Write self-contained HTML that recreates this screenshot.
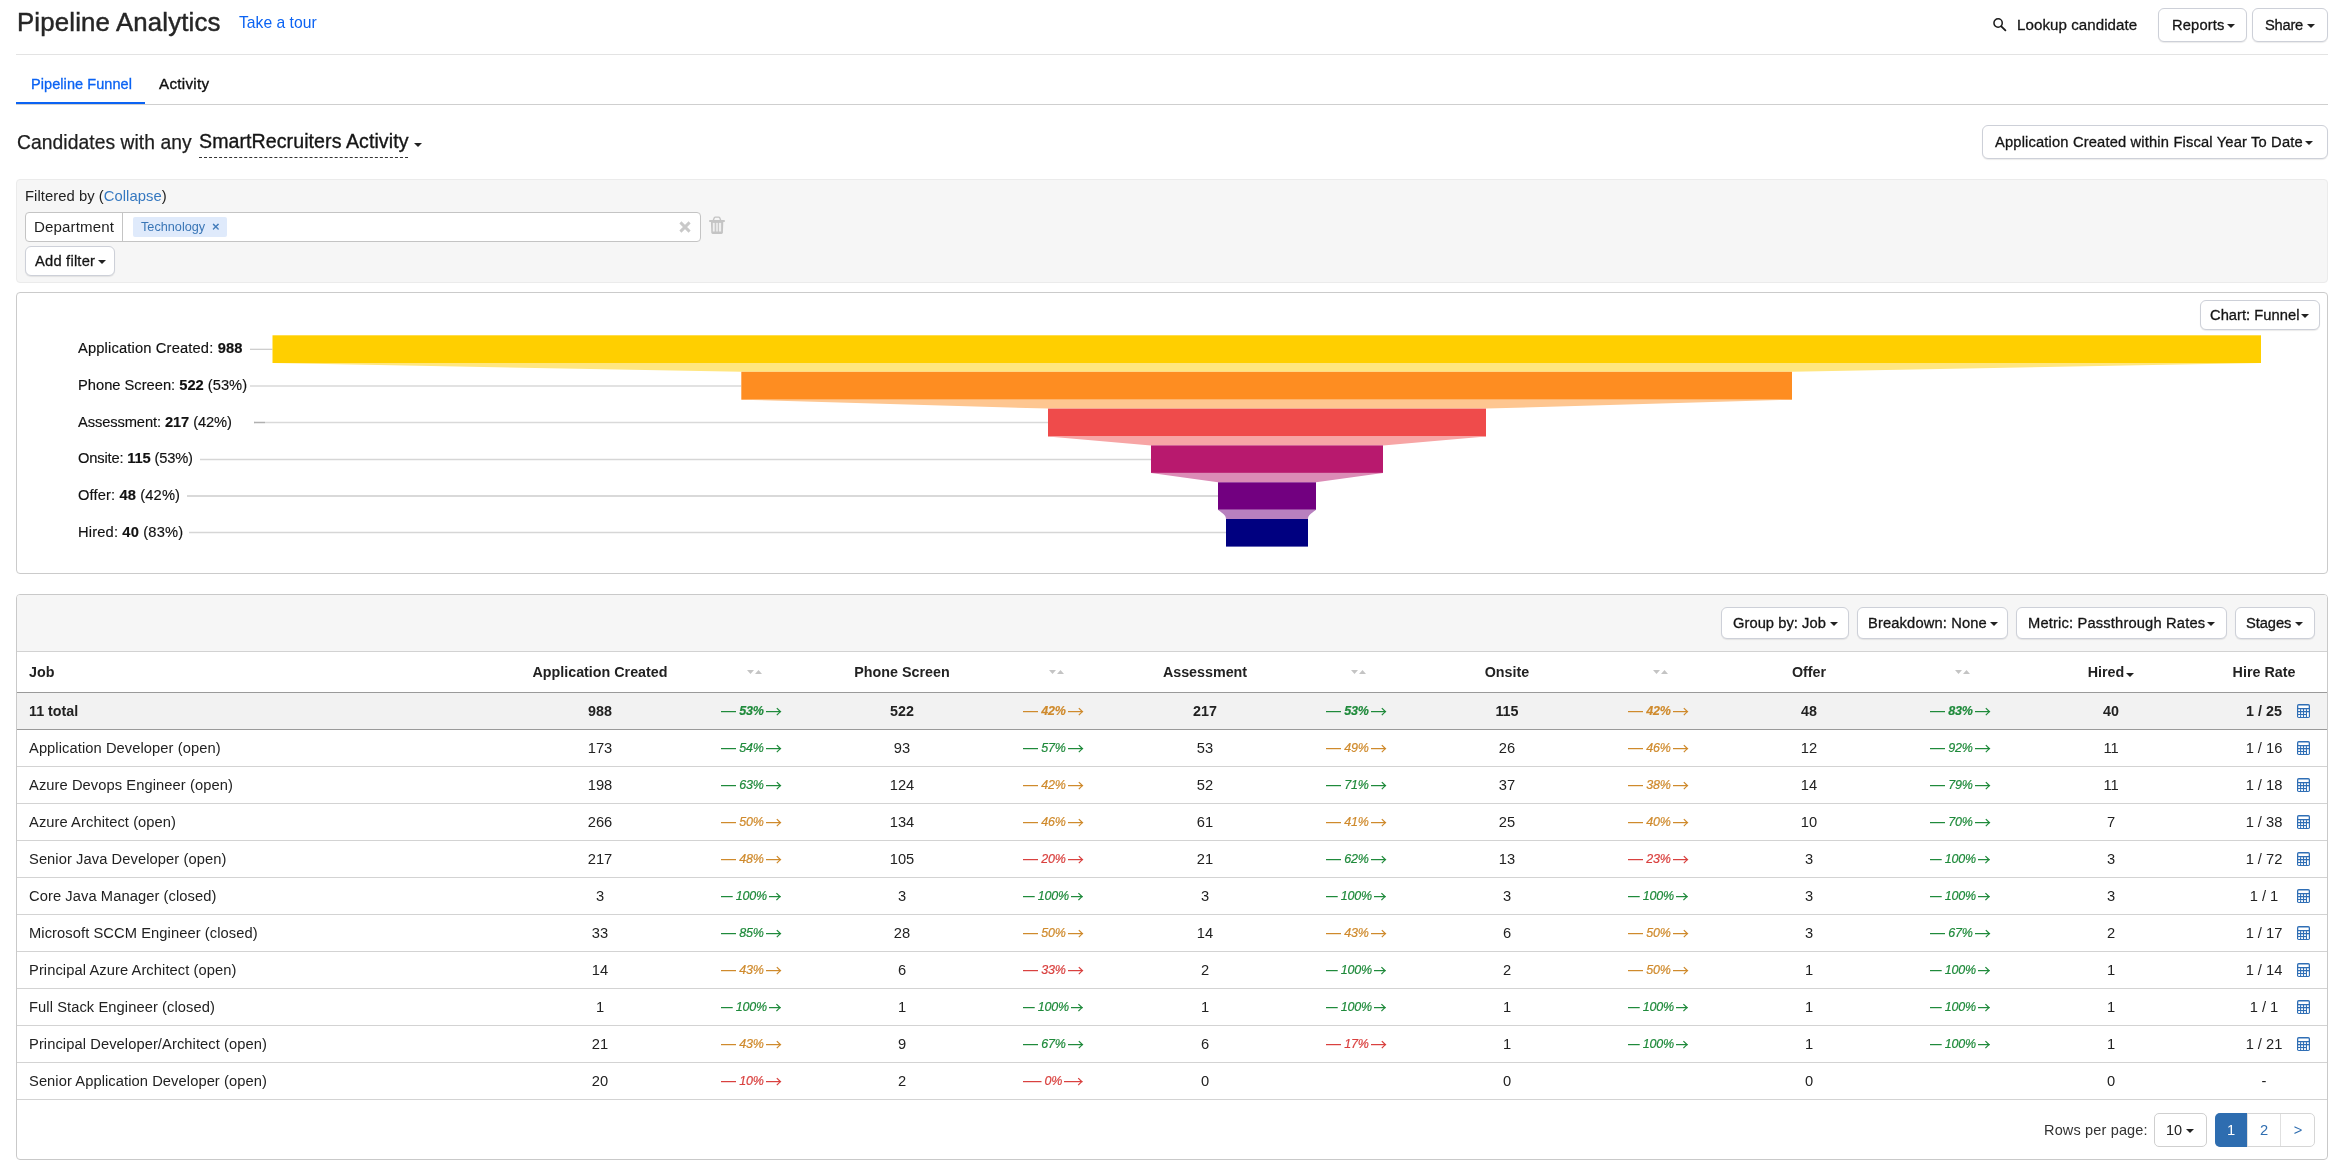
<!DOCTYPE html>
<html><head><meta charset="utf-8"><title>Pipeline Analytics</title><style>
html,body{margin:0;padding:0;background:#fff;}
body{width:2336px;height:1163px;position:relative;overflow:hidden;-webkit-font-smoothing:antialiased;font-family:"Liberation Sans",sans-serif;color:#222;}
.t{position:absolute;white-space:nowrap;will-change:transform;}
.t b{font-weight:700;}
.rate{position:absolute;will-change:transform;width:60px;height:19px;display:flex;align-items:center;font-style:italic;font-size:12.5px;line-height:19px;}
.rate .dl{flex:1 1 0;min-width:0;margin-right:3px;display:block;}
.rate span{flex:none;margin-right:2.2px;letter-spacing:-0.15px;-webkit-text-stroke:0.2px currentColor;}
.rate .ar{flex:1 1 0;min-width:0;display:block;overflow:visible;}
</style></head>
<body>
<div class="t" style="top:10.00px;font-size:25.8px;line-height:25.8px;color:#262626;letter-spacing:0.153px;left:17.20px;-webkit-text-stroke:0.45px #262626;">Pipeline Analytics</div><div class="t" style="top:15.00px;font-size:15.7px;line-height:15.7px;color:#0b63f3;left:238.70px;">Take a tour</div><svg style="position:absolute;left:1992px;top:17px" width="16" height="16" viewBox="0 0 16 16"><circle cx="6.1" cy="6.0" r="4.15" fill="none" stroke="#1a1a1a" stroke-width="1.5"/><line x1="9.3" y1="9.3" x2="13.4" y2="13.4" stroke="#1a1a1a" stroke-width="1.8" stroke-linecap="round"/></svg><div class="t" style="top:17.00px;font-size:15.1px;line-height:15.1px;color:#151515;letter-spacing:0.067px;left:2016.60px;-webkit-text-stroke:0.3px #151515;">Lookup candidate</div><div style="position:absolute;left:2158.00px;top:8.00px;width:89.00px;height:34.00px;box-sizing:border-box;background:#fff;border:1px solid #cdd0d8;border-radius:6px;box-shadow:0 1px 1px rgba(0,0,0,.08);"></div><div class="t" style="top:18.00px;font-size:14.7px;line-height:14.7px;color:#151515;letter-spacing:0.167px;left:2171.70px;-webkit-text-stroke:0.3px #151515;">Reports</div><div style="position:absolute;left:2227px;top:23.5px;width:0;height:0;border-left:4.0px solid transparent;border-right:4.0px solid transparent;border-top:4px solid #222"></div><div style="position:absolute;left:2252.00px;top:8.00px;width:76.00px;height:34.00px;box-sizing:border-box;background:#fff;border:1px solid #cdd0d8;border-radius:6px;box-shadow:0 1px 1px rgba(0,0,0,.08);"></div><div class="t" style="top:18.00px;font-size:14.7px;line-height:14.7px;color:#151515;letter-spacing:-0.25px;left:2265.00px;-webkit-text-stroke:0.3px #151515;">Share</div><div style="position:absolute;left:2307px;top:23.5px;width:0;height:0;border-left:4.0px solid transparent;border-right:4.0px solid transparent;border-top:4px solid #222"></div><div style="position:absolute;left:16.00px;top:54.00px;width:2312.00px;height:1.00px;box-sizing:border-box;background:#e3e3e3;"></div><div class="t" style="top:77.00px;font-size:14.5px;line-height:14.5px;color:#0b63f3;letter-spacing:0.071px;left:30.60px;-webkit-text-stroke:0.3px #0b63f3;">Pipeline Funnel</div><div class="t" style="top:76.00px;font-size:15.2px;line-height:15.2px;color:#111;letter-spacing:0.286px;left:159.40px;-webkit-text-stroke:0.35px #111;">Activity</div><div style="position:absolute;left:16.00px;top:104.00px;width:2312.00px;height:1.00px;box-sizing:border-box;background:#cfcfcf;"></div><div style="position:absolute;left:16.00px;top:102.00px;width:129.00px;height:2.20px;box-sizing:border-box;background:#0b63f3;"></div><div class="t" style="top:133.00px;font-size:19.3px;line-height:19.3px;color:#1e1e1e;letter-spacing:0.056px;left:16.60px;-webkit-text-stroke:0.25px #1e1e1e;">Candidates with any</div><div class="t" style="top:132.00px;font-size:19.6px;line-height:19.6px;color:#151515;letter-spacing:0.065px;left:199.30px;-webkit-text-stroke:0.35px #151515;">SmartRecruiters Activity</div><div style="position:absolute;left:199.30px;top:156.80px;width:208.70px;height:1.20px;box-sizing:border-box;border-top:1.2px dashed #333;"></div><div style="position:absolute;left:413.5px;top:143px;width:0;height:0;border-left:4.5px solid transparent;border-right:4.5px solid transparent;border-top:4.5px solid #222"></div><div style="position:absolute;left:1982.00px;top:125.00px;width:346.00px;height:34.00px;box-sizing:border-box;background:#fff;border:1px solid #cdd0d8;border-radius:6px;box-shadow:0 1px 1px rgba(0,0,0,.08);"></div><div class="t" style="top:135.00px;font-size:14.7px;line-height:14.7px;color:#151515;letter-spacing:0.166px;left:1995.00px;-webkit-text-stroke:0.3px #151515;">Application Created within Fiscal Year To Date</div><div style="position:absolute;left:2305px;top:140.5px;width:0;height:0;border-left:4.0px solid transparent;border-right:4.0px solid transparent;border-top:4px solid #222"></div><div style="position:absolute;left:16.00px;top:179.00px;width:2312.00px;height:104.00px;box-sizing:border-box;background:#f6f6f6;border:1px solid #ebebeb;border-radius:4px;"></div><div class="t" style="top:189.00px;font-size:14.8px;line-height:14.8px;letter-spacing:0.048px;left:25.40px;">Filtered by (<span style="color:#3578c0">Collapse</span>)</div><div style="position:absolute;left:25.40px;top:212.20px;width:675.60px;height:29.60px;box-sizing:border-box;background:#fff;border:1px solid #c4c4c4;border-radius:4px;"></div><div style="position:absolute;left:122.00px;top:212.20px;width:1.20px;height:29.60px;box-sizing:border-box;background:#c4c4c4;"></div><div class="t" style="top:219.00px;font-size:15.1px;line-height:15.1px;color:#1e1e1e;letter-spacing:0.133px;left:33.80px;">Department</div><div style="position:absolute;left:133.20px;top:217.30px;width:93.80px;height:20.00px;box-sizing:border-box;background:#dfeafb;border-radius:2px;"></div><div class="t" style="top:221.00px;font-size:12.7px;line-height:12.7px;color:#3a76b6;left:140.90px;">Technology</div><div class="t" style="top:220.00px;font-size:13px;line-height:13px;color:#3a76b6;left:212.00px;-webkit-text-stroke:0.4px #3a76b6;">&#215;</div><svg style="position:absolute;left:678.5px;top:220.5px" width="12" height="12" viewBox="0 0 12 12"><path d="M1.4 1.4L10.6 10.6M10.6 1.4L1.4 10.6" stroke="#c9c9c9" stroke-width="2.9"/></svg><svg style="position:absolute;left:709px;top:216px" width="16" height="19" viewBox="0 0 16 19"><path d="M4.2 4.4L5.3 1.8Q5.6 1.1 6.4 1.1H9.6Q10.4 1.1 10.7 1.8L11.8 4.4" fill="none" stroke="#c4c4c4" stroke-width="1.4"/><rect x="0.2" y="4.0" width="15.6" height="2.0" rx="0.5" fill="#c4c4c4"/><path d="M1.9 5.8H14.3L13.9 16.6Q13.8 17.9 12.6 17.9H3.6Q2.4 17.9 2.3 16.6Z" fill="#c4c4c4"/><rect x="3.8" y="6.9" width="1.9" height="8.6" fill="#efefef"/><rect x="6.9" y="6.9" width="2.2" height="8.6" fill="#e6e6e6"/><rect x="10.0" y="6.9" width="2.1" height="8.6" fill="#efefef"/></svg><div style="position:absolute;left:25.00px;top:246.00px;width:90.00px;height:30.00px;box-sizing:border-box;background:#fff;border:1px solid #cdd0d8;border-radius:6px;box-shadow:0 1px 1px rgba(0,0,0,.08);"></div><div class="t" style="top:254.00px;font-size:14.7px;line-height:14.7px;color:#151515;letter-spacing:0.222px;left:34.50px;-webkit-text-stroke:0.3px #151515;">Add filter</div><div style="position:absolute;left:98px;top:259.5px;width:0;height:0;border-left:4.0px solid transparent;border-right:4.0px solid transparent;border-top:4px solid #222"></div><div style="position:absolute;left:16.00px;top:292.00px;width:2312.00px;height:282.00px;box-sizing:border-box;background:#fff;border:1px solid #cbcbcb;border-radius:4px;"></div><div style="position:absolute;left:2200.00px;top:300.00px;width:120.00px;height:30.00px;box-sizing:border-box;background:#fff;border:1px solid #cdd0d8;border-radius:6px;box-shadow:0 1px 1px rgba(0,0,0,.08);"></div><div class="t" style="top:308.00px;font-size:14.7px;line-height:14.7px;color:#151515;letter-spacing:0.038px;left:2209.70px;-webkit-text-stroke:0.3px #151515;">Chart: Funnel</div><div style="position:absolute;left:2301px;top:313.5px;width:0;height:0;border-left:4.0px solid transparent;border-right:4.0px solid transparent;border-top:4px solid #222"></div><svg style="position:absolute;left:0;top:0" width="2336" height="600" viewBox="0 0 2336 600"><line x1="250" y1="349.3" x2="272.5" y2="349.3" stroke="#c9c9c9" stroke-width="1.2"/><line x1="250" y1="386.0" x2="741.3" y2="386.0" stroke="#e2e2e2" stroke-width="2.0"/><line x1="254" y1="422.5" x2="1048" y2="422.5" stroke="#d9d9d9" stroke-width="1.5"/><line x1="200" y1="459.4" x2="1151" y2="459.4" stroke="#d6d6d6" stroke-width="1.5"/><line x1="187" y1="496.0" x2="1218" y2="496.0" stroke="#d9d9d9" stroke-width="1.8"/><line x1="189" y1="532.4" x2="1226" y2="532.4" stroke="#d6d6d6" stroke-width="1.5"/><line x1="254" y1="422.5" x2="265" y2="422.5" stroke="#b0b0b0" stroke-width="1.3"/><rect x="272.5" y="335.3" width="1988.5" height="27.69999999999999" fill="#ffcf00"/><path d="M272.5 363.0 L2261 363.0 L1792 371.8 L741.3 371.8 Z" fill="#ffe680"/><rect x="741.3" y="371.8" width="1050.7" height="27.899999999999977" fill="#fe8d21"/><path d="M741.3 399.7 L1792 399.7 L1486 408.6 L1048 408.6 Z" fill="#fec690"/><rect x="1048" y="408.6" width="438" height="27.899999999999977" fill="#ef4b4b"/><path d="M1048 436.5 L1486 436.5 L1383 445.4 L1151 445.4 Z" fill="#f7a5a5"/><rect x="1151" y="445.4" width="232" height="27.5" fill="#b8196e"/><path d="M1151 472.9 L1383 472.9 L1316 482.3 L1218 482.3 Z" fill="#db8cb6"/><rect x="1218" y="482.3" width="98" height="27.5" fill="#720080"/><path d="M1218 509.8 L1316 509.8 C1311 513.8 1308 515.3 1308 519.0 L1226 519.0 C1226 515.3 1223 513.8 1218 509.8 Z" fill="#b880bf"/><rect x="1226" y="519.0" width="82" height="27.600000000000023" fill="#000080"/></svg><div class="t" style="top:341.00px;font-size:14.7px;line-height:14.7px;color:#111;letter-spacing:0.157px;left:77.80px;-webkit-text-stroke:0.15px #111;">Application Created: <b>988</b></div><div class="t" style="top:378.00px;font-size:14.7px;line-height:14.7px;color:#111;left:77.80px;-webkit-text-stroke:0.15px #111;">Phone Screen: <b>522</b> (53%)</div><div class="t" style="top:415.00px;font-size:14.7px;line-height:14.7px;color:#111;letter-spacing:-0.1px;left:77.80px;-webkit-text-stroke:0.15px #111;">Assessment: <b>217</b> (42%)</div><div class="t" style="top:451.00px;font-size:14.7px;line-height:14.7px;color:#111;letter-spacing:-0.163px;left:77.80px;-webkit-text-stroke:0.15px #111;">Onsite: <b>115</b> (53%)</div><div class="t" style="top:488.00px;font-size:14.7px;line-height:14.7px;color:#111;letter-spacing:0.129px;left:77.80px;-webkit-text-stroke:0.15px #111;">Offer: <b>48</b> (42%)</div><div class="t" style="top:525.00px;font-size:14.7px;line-height:14.7px;color:#111;letter-spacing:0.157px;left:77.80px;-webkit-text-stroke:0.15px #111;">Hired: <b>40</b> (83%)</div><div style="position:absolute;left:16.00px;top:594.00px;width:2312.00px;height:566.00px;box-sizing:border-box;background:#fff;border:1px solid #c9c9c9;border-radius:4px;"></div><div style="position:absolute;left:17.00px;top:595.00px;width:2310.00px;height:56.00px;box-sizing:border-box;background:#f6f6f6;border-radius:3px 3px 0 0;"></div><div style="position:absolute;left:17.00px;top:651.00px;width:2310.00px;height:1.00px;box-sizing:border-box;background:#d2d2d2;"></div><div style="position:absolute;left:1721.00px;top:607.00px;width:128.00px;height:32.00px;box-sizing:border-box;background:#fff;border:1px solid #cdd0d8;border-radius:6px;box-shadow:0 1px 1px rgba(0,0,0,.08);"></div><div class="t" style="top:616.00px;font-size:14.7px;line-height:14.7px;color:#151515;letter-spacing:0.05px;left:1732.60px;-webkit-text-stroke:0.3px #151515;">Group by: Job</div><div style="position:absolute;left:1830.3px;top:621.5px;width:0;height:0;border-left:4.0px solid transparent;border-right:4.0px solid transparent;border-top:4px solid #222"></div><div style="position:absolute;left:1857.00px;top:607.00px;width:151.00px;height:32.00px;box-sizing:border-box;background:#fff;border:1px solid #cdd0d8;border-radius:6px;box-shadow:0 1px 1px rgba(0,0,0,.08);"></div><div class="t" style="top:616.00px;font-size:14.7px;line-height:14.7px;color:#151515;letter-spacing:0.143px;left:1868.20px;-webkit-text-stroke:0.3px #151515;">Breakdown: None</div><div style="position:absolute;left:1990px;top:621.5px;width:0;height:0;border-left:4.0px solid transparent;border-right:4.0px solid transparent;border-top:4px solid #222"></div><div style="position:absolute;left:2016.00px;top:607.00px;width:211.00px;height:32.00px;box-sizing:border-box;background:#fff;border:1px solid #cdd0d8;border-radius:6px;box-shadow:0 1px 1px rgba(0,0,0,.08);"></div><div class="t" style="top:616.00px;font-size:14.7px;line-height:14.7px;color:#151515;letter-spacing:0.167px;left:2027.70px;-webkit-text-stroke:0.3px #151515;">Metric: Passthrough Rates</div><div style="position:absolute;left:2207px;top:621.5px;width:0;height:0;border-left:4.0px solid transparent;border-right:4.0px solid transparent;border-top:4px solid #222"></div><div style="position:absolute;left:2235.00px;top:607.00px;width:80.00px;height:32.00px;box-sizing:border-box;background:#fff;border:1px solid #cdd0d8;border-radius:6px;box-shadow:0 1px 1px rgba(0,0,0,.08);"></div><div class="t" style="top:616.00px;font-size:14.7px;line-height:14.7px;color:#151515;letter-spacing:-0.08px;left:2245.80px;-webkit-text-stroke:0.3px #151515;">Stages</div><div style="position:absolute;left:2295px;top:621.5px;width:0;height:0;border-left:4.0px solid transparent;border-right:4.0px solid transparent;border-top:4px solid #222"></div><div class="t" style="top:665.00px;font-size:14.3px;line-height:14.3px;font-weight:700;left:29.40px;">Job</div><div class="t" style="top:665.00px;font-size:14.3px;line-height:14.3px;font-weight:700;left:300.20px;width:600px;text-align:center;">Application Created</div><div class="t" style="top:665.00px;font-size:14.3px;line-height:14.3px;font-weight:700;left:602.35px;width:600px;text-align:center;">Phone Screen</div><div class="t" style="top:665.00px;font-size:14.3px;line-height:14.3px;font-weight:700;left:904.50px;width:600px;text-align:center;">Assessment</div><div class="t" style="top:665.00px;font-size:14.3px;line-height:14.3px;font-weight:700;left:1206.65px;width:600px;text-align:center;">Onsite</div><div class="t" style="top:665.00px;font-size:14.3px;line-height:14.3px;font-weight:700;left:1508.80px;width:600px;text-align:center;">Offer</div><div class="t" style="top:665.00px;font-size:14.3px;line-height:14.3px;font-weight:700;left:1806.00px;width:600px;text-align:center;">Hired</div><div style="position:absolute;left:2126px;top:673px;width:0;height:0;border-left:4.0px solid transparent;border-right:4.0px solid transparent;border-top:4px solid #222"></div><svg style="position:absolute;left:746.6px;top:670px" width="16" height="5" viewBox="0 0 16 5"><path d="M0 0H7L3.5 4Z M8 4H15L11.5 0Z" fill="#c4c4c4"/></svg><svg style="position:absolute;left:1048.8px;top:670px" width="16" height="5" viewBox="0 0 16 5"><path d="M0 0H7L3.5 4Z M8 4H15L11.5 0Z" fill="#c4c4c4"/></svg><svg style="position:absolute;left:1351.0px;top:670px" width="16" height="5" viewBox="0 0 16 5"><path d="M0 0H7L3.5 4Z M8 4H15L11.5 0Z" fill="#c4c4c4"/></svg><svg style="position:absolute;left:1653.1999999999998px;top:670px" width="16" height="5" viewBox="0 0 16 5"><path d="M0 0H7L3.5 4Z M8 4H15L11.5 0Z" fill="#c4c4c4"/></svg><svg style="position:absolute;left:1955.4px;top:670px" width="16" height="5" viewBox="0 0 16 5"><path d="M0 0H7L3.5 4Z M8 4H15L11.5 0Z" fill="#c4c4c4"/></svg><div class="t" style="top:665.00px;font-size:14.3px;line-height:14.3px;font-weight:700;left:1964.00px;width:600px;text-align:center;">Hire Rate</div><div style="position:absolute;left:17.00px;top:692.00px;width:2310.00px;height:1.00px;box-sizing:border-box;background:#9a9a9a;"></div><div style="position:absolute;left:17.00px;top:693.00px;width:2310.00px;height:36.00px;box-sizing:border-box;background:#f2f2f2;"></div><div style="position:absolute;left:17.00px;top:729.00px;width:2310.00px;height:1.00px;box-sizing:border-box;background:#9a9a9a;"></div><div class="t" style="top:704.00px;font-size:14.3px;line-height:14.3px;font-weight:700;left:29.40px;">11 total</div><div class="t" style="top:704.00px;font-size:14.3px;line-height:14.3px;font-weight:700;left:300.20px;width:600px;text-align:center;">988</div><div class="t" style="top:704.00px;font-size:14.3px;line-height:14.3px;font-weight:700;left:602.35px;width:600px;text-align:center;">522</div><div class="t" style="top:704.00px;font-size:14.3px;line-height:14.3px;font-weight:700;left:904.50px;width:600px;text-align:center;">217</div><div class="t" style="top:704.00px;font-size:14.3px;line-height:14.3px;font-weight:700;left:1206.65px;width:600px;text-align:center;">115</div><div class="t" style="top:704.00px;font-size:14.3px;line-height:14.3px;font-weight:700;left:1508.80px;width:600px;text-align:center;">48</div><div class="t" style="top:704.00px;font-size:14.3px;line-height:14.3px;font-weight:700;left:1810.95px;width:600px;text-align:center;">40</div><div class="rate" style="left:721.0px;top:702px;color:#1f8a3b;font-weight:700;"><svg class="dl" height="19"><line x1="0" y1="9.6" x2="100%" y2="9.6" stroke="#1f8a3b" stroke-width="1.25"/></svg><span>53%</span><svg class="ar" height="19"><line x1="0" y1="9.6" x2="100%" y2="9.6" stroke="#1f8a3b" stroke-width="1.25"/><svg x="100%" y="0" width="1" height="19" overflow="visible"><path d="M-4.3 6.1L-0.8 9.6L-4.3 13.1" fill="none" stroke="#1f8a3b" stroke-width="1.25"/></svg></svg></div><div class="rate" style="left:1023.25px;top:702px;color:#cf8a2c;font-weight:700;"><svg class="dl" height="19"><line x1="0" y1="9.6" x2="100%" y2="9.6" stroke="#cf8a2c" stroke-width="1.25"/></svg><span>42%</span><svg class="ar" height="19"><line x1="0" y1="9.6" x2="100%" y2="9.6" stroke="#cf8a2c" stroke-width="1.25"/><svg x="100%" y="0" width="1" height="19" overflow="visible"><path d="M-4.3 6.1L-0.8 9.6L-4.3 13.1" fill="none" stroke="#cf8a2c" stroke-width="1.25"/></svg></svg></div><div class="rate" style="left:1325.5px;top:702px;color:#1f8a3b;font-weight:700;"><svg class="dl" height="19"><line x1="0" y1="9.6" x2="100%" y2="9.6" stroke="#1f8a3b" stroke-width="1.25"/></svg><span>53%</span><svg class="ar" height="19"><line x1="0" y1="9.6" x2="100%" y2="9.6" stroke="#1f8a3b" stroke-width="1.25"/><svg x="100%" y="0" width="1" height="19" overflow="visible"><path d="M-4.3 6.1L-0.8 9.6L-4.3 13.1" fill="none" stroke="#1f8a3b" stroke-width="1.25"/></svg></svg></div><div class="rate" style="left:1627.75px;top:702px;color:#cf8a2c;font-weight:700;"><svg class="dl" height="19"><line x1="0" y1="9.6" x2="100%" y2="9.6" stroke="#cf8a2c" stroke-width="1.25"/></svg><span>42%</span><svg class="ar" height="19"><line x1="0" y1="9.6" x2="100%" y2="9.6" stroke="#cf8a2c" stroke-width="1.25"/><svg x="100%" y="0" width="1" height="19" overflow="visible"><path d="M-4.3 6.1L-0.8 9.6L-4.3 13.1" fill="none" stroke="#cf8a2c" stroke-width="1.25"/></svg></svg></div><div class="rate" style="left:1930.0px;top:702px;color:#1f8a3b;font-weight:700;"><svg class="dl" height="19"><line x1="0" y1="9.6" x2="100%" y2="9.6" stroke="#1f8a3b" stroke-width="1.25"/></svg><span>83%</span><svg class="ar" height="19"><line x1="0" y1="9.6" x2="100%" y2="9.6" stroke="#1f8a3b" stroke-width="1.25"/><svg x="100%" y="0" width="1" height="19" overflow="visible"><path d="M-4.3 6.1L-0.8 9.6L-4.3 13.1" fill="none" stroke="#1f8a3b" stroke-width="1.25"/></svg></svg></div><div class="t" style="top:704.00px;font-size:14.3px;line-height:14.3px;font-weight:700;left:1964.30px;width:600px;text-align:center;">1 / 25</div><svg style="position:absolute;left:2297px;top:704px" width="13" height="14" viewBox="0 0 13 14"><rect x="0" y="0" width="13" height="14" rx="1.8" fill="#2f6eb5"/><rect x="1.3" y="1.5" width="10.4" height="2.5" rx="0.3" fill="#fff"/><g fill="#fff"><rect x="1.20" y="5.20" width="1.85" height="1.85" rx="0.2"/><rect x="4.13" y="5.20" width="1.85" height="1.85" rx="0.2"/><rect x="7.06" y="5.20" width="1.85" height="1.85" rx="0.2"/><rect x="9.99" y="5.20" width="1.85" height="1.85" rx="0.2"/><rect x="1.20" y="8.13" width="1.85" height="1.85" rx="0.2"/><rect x="4.13" y="8.13" width="1.85" height="1.85" rx="0.2"/><rect x="7.06" y="8.13" width="1.85" height="1.85" rx="0.2"/><rect x="1.20" y="11.06" width="1.85" height="1.85" rx="0.2"/><rect x="4.13" y="11.06" width="1.85" height="1.85" rx="0.2"/><rect x="7.06" y="11.06" width="1.85" height="1.85" rx="0.2"/><rect x="9.99" y="8.13" width="1.85" height="4.75" rx="0.3"/></g></svg><div style="position:absolute;left:17.00px;top:766.00px;width:2310.00px;height:1.00px;box-sizing:border-box;background:#d3d3d3;"></div><div class="t" style="top:741.00px;font-size:14.7px;line-height:14.7px;letter-spacing:0.08px;left:29.40px;">Application Developer (open)</div><div class="t" style="top:741.00px;font-size:14.7px;line-height:14.7px;left:300.20px;width:600px;text-align:center;">173</div><div class="t" style="top:741.00px;font-size:14.7px;line-height:14.7px;left:602.35px;width:600px;text-align:center;">93</div><div class="t" style="top:741.00px;font-size:14.7px;line-height:14.7px;left:904.50px;width:600px;text-align:center;">53</div><div class="t" style="top:741.00px;font-size:14.7px;line-height:14.7px;left:1206.65px;width:600px;text-align:center;">26</div><div class="t" style="top:741.00px;font-size:14.7px;line-height:14.7px;left:1508.80px;width:600px;text-align:center;">12</div><div class="t" style="top:741.00px;font-size:14.7px;line-height:14.7px;left:1810.95px;width:600px;text-align:center;">11</div><div class="rate" style="left:721.0px;top:739px;color:#1f8a3b;"><svg class="dl" height="19"><line x1="0" y1="9.6" x2="100%" y2="9.6" stroke="#1f8a3b" stroke-width="1.25"/></svg><span>54%</span><svg class="ar" height="19"><line x1="0" y1="9.6" x2="100%" y2="9.6" stroke="#1f8a3b" stroke-width="1.25"/><svg x="100%" y="0" width="1" height="19" overflow="visible"><path d="M-4.3 6.1L-0.8 9.6L-4.3 13.1" fill="none" stroke="#1f8a3b" stroke-width="1.25"/></svg></svg></div><div class="rate" style="left:1023.25px;top:739px;color:#1f8a3b;"><svg class="dl" height="19"><line x1="0" y1="9.6" x2="100%" y2="9.6" stroke="#1f8a3b" stroke-width="1.25"/></svg><span>57%</span><svg class="ar" height="19"><line x1="0" y1="9.6" x2="100%" y2="9.6" stroke="#1f8a3b" stroke-width="1.25"/><svg x="100%" y="0" width="1" height="19" overflow="visible"><path d="M-4.3 6.1L-0.8 9.6L-4.3 13.1" fill="none" stroke="#1f8a3b" stroke-width="1.25"/></svg></svg></div><div class="rate" style="left:1325.5px;top:739px;color:#cf8a2c;"><svg class="dl" height="19"><line x1="0" y1="9.6" x2="100%" y2="9.6" stroke="#cf8a2c" stroke-width="1.25"/></svg><span>49%</span><svg class="ar" height="19"><line x1="0" y1="9.6" x2="100%" y2="9.6" stroke="#cf8a2c" stroke-width="1.25"/><svg x="100%" y="0" width="1" height="19" overflow="visible"><path d="M-4.3 6.1L-0.8 9.6L-4.3 13.1" fill="none" stroke="#cf8a2c" stroke-width="1.25"/></svg></svg></div><div class="rate" style="left:1627.75px;top:739px;color:#cf8a2c;"><svg class="dl" height="19"><line x1="0" y1="9.6" x2="100%" y2="9.6" stroke="#cf8a2c" stroke-width="1.25"/></svg><span>46%</span><svg class="ar" height="19"><line x1="0" y1="9.6" x2="100%" y2="9.6" stroke="#cf8a2c" stroke-width="1.25"/><svg x="100%" y="0" width="1" height="19" overflow="visible"><path d="M-4.3 6.1L-0.8 9.6L-4.3 13.1" fill="none" stroke="#cf8a2c" stroke-width="1.25"/></svg></svg></div><div class="rate" style="left:1930.0px;top:739px;color:#1f8a3b;"><svg class="dl" height="19"><line x1="0" y1="9.6" x2="100%" y2="9.6" stroke="#1f8a3b" stroke-width="1.25"/></svg><span>92%</span><svg class="ar" height="19"><line x1="0" y1="9.6" x2="100%" y2="9.6" stroke="#1f8a3b" stroke-width="1.25"/><svg x="100%" y="0" width="1" height="19" overflow="visible"><path d="M-4.3 6.1L-0.8 9.6L-4.3 13.1" fill="none" stroke="#1f8a3b" stroke-width="1.25"/></svg></svg></div><div class="t" style="top:741.00px;font-size:14.7px;line-height:14.7px;left:1964.30px;width:600px;text-align:center;">1 / 16</div><svg style="position:absolute;left:2297px;top:741px" width="13" height="14" viewBox="0 0 13 14"><rect x="0" y="0" width="13" height="14" rx="1.8" fill="#2f6eb5"/><rect x="1.3" y="1.5" width="10.4" height="2.5" rx="0.3" fill="#fff"/><g fill="#fff"><rect x="1.20" y="5.20" width="1.85" height="1.85" rx="0.2"/><rect x="4.13" y="5.20" width="1.85" height="1.85" rx="0.2"/><rect x="7.06" y="5.20" width="1.85" height="1.85" rx="0.2"/><rect x="9.99" y="5.20" width="1.85" height="1.85" rx="0.2"/><rect x="1.20" y="8.13" width="1.85" height="1.85" rx="0.2"/><rect x="4.13" y="8.13" width="1.85" height="1.85" rx="0.2"/><rect x="7.06" y="8.13" width="1.85" height="1.85" rx="0.2"/><rect x="1.20" y="11.06" width="1.85" height="1.85" rx="0.2"/><rect x="4.13" y="11.06" width="1.85" height="1.85" rx="0.2"/><rect x="7.06" y="11.06" width="1.85" height="1.85" rx="0.2"/><rect x="9.99" y="8.13" width="1.85" height="4.75" rx="0.3"/></g></svg><div style="position:absolute;left:17.00px;top:803.00px;width:2310.00px;height:1.00px;box-sizing:border-box;background:#d3d3d3;"></div><div class="t" style="top:778.00px;font-size:14.7px;line-height:14.7px;letter-spacing:0.08px;left:29.40px;">Azure Devops Engineer (open)</div><div class="t" style="top:778.00px;font-size:14.7px;line-height:14.7px;left:300.20px;width:600px;text-align:center;">198</div><div class="t" style="top:778.00px;font-size:14.7px;line-height:14.7px;left:602.35px;width:600px;text-align:center;">124</div><div class="t" style="top:778.00px;font-size:14.7px;line-height:14.7px;left:904.50px;width:600px;text-align:center;">52</div><div class="t" style="top:778.00px;font-size:14.7px;line-height:14.7px;left:1206.65px;width:600px;text-align:center;">37</div><div class="t" style="top:778.00px;font-size:14.7px;line-height:14.7px;left:1508.80px;width:600px;text-align:center;">14</div><div class="t" style="top:778.00px;font-size:14.7px;line-height:14.7px;left:1810.95px;width:600px;text-align:center;">11</div><div class="rate" style="left:721.0px;top:776px;color:#1f8a3b;"><svg class="dl" height="19"><line x1="0" y1="9.6" x2="100%" y2="9.6" stroke="#1f8a3b" stroke-width="1.25"/></svg><span>63%</span><svg class="ar" height="19"><line x1="0" y1="9.6" x2="100%" y2="9.6" stroke="#1f8a3b" stroke-width="1.25"/><svg x="100%" y="0" width="1" height="19" overflow="visible"><path d="M-4.3 6.1L-0.8 9.6L-4.3 13.1" fill="none" stroke="#1f8a3b" stroke-width="1.25"/></svg></svg></div><div class="rate" style="left:1023.25px;top:776px;color:#cf8a2c;"><svg class="dl" height="19"><line x1="0" y1="9.6" x2="100%" y2="9.6" stroke="#cf8a2c" stroke-width="1.25"/></svg><span>42%</span><svg class="ar" height="19"><line x1="0" y1="9.6" x2="100%" y2="9.6" stroke="#cf8a2c" stroke-width="1.25"/><svg x="100%" y="0" width="1" height="19" overflow="visible"><path d="M-4.3 6.1L-0.8 9.6L-4.3 13.1" fill="none" stroke="#cf8a2c" stroke-width="1.25"/></svg></svg></div><div class="rate" style="left:1325.5px;top:776px;color:#1f8a3b;"><svg class="dl" height="19"><line x1="0" y1="9.6" x2="100%" y2="9.6" stroke="#1f8a3b" stroke-width="1.25"/></svg><span>71%</span><svg class="ar" height="19"><line x1="0" y1="9.6" x2="100%" y2="9.6" stroke="#1f8a3b" stroke-width="1.25"/><svg x="100%" y="0" width="1" height="19" overflow="visible"><path d="M-4.3 6.1L-0.8 9.6L-4.3 13.1" fill="none" stroke="#1f8a3b" stroke-width="1.25"/></svg></svg></div><div class="rate" style="left:1627.75px;top:776px;color:#cf8a2c;"><svg class="dl" height="19"><line x1="0" y1="9.6" x2="100%" y2="9.6" stroke="#cf8a2c" stroke-width="1.25"/></svg><span>38%</span><svg class="ar" height="19"><line x1="0" y1="9.6" x2="100%" y2="9.6" stroke="#cf8a2c" stroke-width="1.25"/><svg x="100%" y="0" width="1" height="19" overflow="visible"><path d="M-4.3 6.1L-0.8 9.6L-4.3 13.1" fill="none" stroke="#cf8a2c" stroke-width="1.25"/></svg></svg></div><div class="rate" style="left:1930.0px;top:776px;color:#1f8a3b;"><svg class="dl" height="19"><line x1="0" y1="9.6" x2="100%" y2="9.6" stroke="#1f8a3b" stroke-width="1.25"/></svg><span>79%</span><svg class="ar" height="19"><line x1="0" y1="9.6" x2="100%" y2="9.6" stroke="#1f8a3b" stroke-width="1.25"/><svg x="100%" y="0" width="1" height="19" overflow="visible"><path d="M-4.3 6.1L-0.8 9.6L-4.3 13.1" fill="none" stroke="#1f8a3b" stroke-width="1.25"/></svg></svg></div><div class="t" style="top:778.00px;font-size:14.7px;line-height:14.7px;left:1964.30px;width:600px;text-align:center;">1 / 18</div><svg style="position:absolute;left:2297px;top:778px" width="13" height="14" viewBox="0 0 13 14"><rect x="0" y="0" width="13" height="14" rx="1.8" fill="#2f6eb5"/><rect x="1.3" y="1.5" width="10.4" height="2.5" rx="0.3" fill="#fff"/><g fill="#fff"><rect x="1.20" y="5.20" width="1.85" height="1.85" rx="0.2"/><rect x="4.13" y="5.20" width="1.85" height="1.85" rx="0.2"/><rect x="7.06" y="5.20" width="1.85" height="1.85" rx="0.2"/><rect x="9.99" y="5.20" width="1.85" height="1.85" rx="0.2"/><rect x="1.20" y="8.13" width="1.85" height="1.85" rx="0.2"/><rect x="4.13" y="8.13" width="1.85" height="1.85" rx="0.2"/><rect x="7.06" y="8.13" width="1.85" height="1.85" rx="0.2"/><rect x="1.20" y="11.06" width="1.85" height="1.85" rx="0.2"/><rect x="4.13" y="11.06" width="1.85" height="1.85" rx="0.2"/><rect x="7.06" y="11.06" width="1.85" height="1.85" rx="0.2"/><rect x="9.99" y="8.13" width="1.85" height="4.75" rx="0.3"/></g></svg><div style="position:absolute;left:17.00px;top:840.00px;width:2310.00px;height:1.00px;box-sizing:border-box;background:#d3d3d3;"></div><div class="t" style="top:815.00px;font-size:14.7px;line-height:14.7px;letter-spacing:0.08px;left:29.40px;">Azure Architect (open)</div><div class="t" style="top:815.00px;font-size:14.7px;line-height:14.7px;left:300.20px;width:600px;text-align:center;">266</div><div class="t" style="top:815.00px;font-size:14.7px;line-height:14.7px;left:602.35px;width:600px;text-align:center;">134</div><div class="t" style="top:815.00px;font-size:14.7px;line-height:14.7px;left:904.50px;width:600px;text-align:center;">61</div><div class="t" style="top:815.00px;font-size:14.7px;line-height:14.7px;left:1206.65px;width:600px;text-align:center;">25</div><div class="t" style="top:815.00px;font-size:14.7px;line-height:14.7px;left:1508.80px;width:600px;text-align:center;">10</div><div class="t" style="top:815.00px;font-size:14.7px;line-height:14.7px;left:1810.95px;width:600px;text-align:center;">7</div><div class="rate" style="left:721.0px;top:813px;color:#cf8a2c;"><svg class="dl" height="19"><line x1="0" y1="9.6" x2="100%" y2="9.6" stroke="#cf8a2c" stroke-width="1.25"/></svg><span>50%</span><svg class="ar" height="19"><line x1="0" y1="9.6" x2="100%" y2="9.6" stroke="#cf8a2c" stroke-width="1.25"/><svg x="100%" y="0" width="1" height="19" overflow="visible"><path d="M-4.3 6.1L-0.8 9.6L-4.3 13.1" fill="none" stroke="#cf8a2c" stroke-width="1.25"/></svg></svg></div><div class="rate" style="left:1023.25px;top:813px;color:#cf8a2c;"><svg class="dl" height="19"><line x1="0" y1="9.6" x2="100%" y2="9.6" stroke="#cf8a2c" stroke-width="1.25"/></svg><span>46%</span><svg class="ar" height="19"><line x1="0" y1="9.6" x2="100%" y2="9.6" stroke="#cf8a2c" stroke-width="1.25"/><svg x="100%" y="0" width="1" height="19" overflow="visible"><path d="M-4.3 6.1L-0.8 9.6L-4.3 13.1" fill="none" stroke="#cf8a2c" stroke-width="1.25"/></svg></svg></div><div class="rate" style="left:1325.5px;top:813px;color:#cf8a2c;"><svg class="dl" height="19"><line x1="0" y1="9.6" x2="100%" y2="9.6" stroke="#cf8a2c" stroke-width="1.25"/></svg><span>41%</span><svg class="ar" height="19"><line x1="0" y1="9.6" x2="100%" y2="9.6" stroke="#cf8a2c" stroke-width="1.25"/><svg x="100%" y="0" width="1" height="19" overflow="visible"><path d="M-4.3 6.1L-0.8 9.6L-4.3 13.1" fill="none" stroke="#cf8a2c" stroke-width="1.25"/></svg></svg></div><div class="rate" style="left:1627.75px;top:813px;color:#cf8a2c;"><svg class="dl" height="19"><line x1="0" y1="9.6" x2="100%" y2="9.6" stroke="#cf8a2c" stroke-width="1.25"/></svg><span>40%</span><svg class="ar" height="19"><line x1="0" y1="9.6" x2="100%" y2="9.6" stroke="#cf8a2c" stroke-width="1.25"/><svg x="100%" y="0" width="1" height="19" overflow="visible"><path d="M-4.3 6.1L-0.8 9.6L-4.3 13.1" fill="none" stroke="#cf8a2c" stroke-width="1.25"/></svg></svg></div><div class="rate" style="left:1930.0px;top:813px;color:#1f8a3b;"><svg class="dl" height="19"><line x1="0" y1="9.6" x2="100%" y2="9.6" stroke="#1f8a3b" stroke-width="1.25"/></svg><span>70%</span><svg class="ar" height="19"><line x1="0" y1="9.6" x2="100%" y2="9.6" stroke="#1f8a3b" stroke-width="1.25"/><svg x="100%" y="0" width="1" height="19" overflow="visible"><path d="M-4.3 6.1L-0.8 9.6L-4.3 13.1" fill="none" stroke="#1f8a3b" stroke-width="1.25"/></svg></svg></div><div class="t" style="top:815.00px;font-size:14.7px;line-height:14.7px;left:1964.30px;width:600px;text-align:center;">1 / 38</div><svg style="position:absolute;left:2297px;top:815px" width="13" height="14" viewBox="0 0 13 14"><rect x="0" y="0" width="13" height="14" rx="1.8" fill="#2f6eb5"/><rect x="1.3" y="1.5" width="10.4" height="2.5" rx="0.3" fill="#fff"/><g fill="#fff"><rect x="1.20" y="5.20" width="1.85" height="1.85" rx="0.2"/><rect x="4.13" y="5.20" width="1.85" height="1.85" rx="0.2"/><rect x="7.06" y="5.20" width="1.85" height="1.85" rx="0.2"/><rect x="9.99" y="5.20" width="1.85" height="1.85" rx="0.2"/><rect x="1.20" y="8.13" width="1.85" height="1.85" rx="0.2"/><rect x="4.13" y="8.13" width="1.85" height="1.85" rx="0.2"/><rect x="7.06" y="8.13" width="1.85" height="1.85" rx="0.2"/><rect x="1.20" y="11.06" width="1.85" height="1.85" rx="0.2"/><rect x="4.13" y="11.06" width="1.85" height="1.85" rx="0.2"/><rect x="7.06" y="11.06" width="1.85" height="1.85" rx="0.2"/><rect x="9.99" y="8.13" width="1.85" height="4.75" rx="0.3"/></g></svg><div style="position:absolute;left:17.00px;top:877.00px;width:2310.00px;height:1.00px;box-sizing:border-box;background:#d3d3d3;"></div><div class="t" style="top:852.00px;font-size:14.7px;line-height:14.7px;letter-spacing:0.08px;left:29.40px;">Senior Java Developer (open)</div><div class="t" style="top:852.00px;font-size:14.7px;line-height:14.7px;left:300.20px;width:600px;text-align:center;">217</div><div class="t" style="top:852.00px;font-size:14.7px;line-height:14.7px;left:602.35px;width:600px;text-align:center;">105</div><div class="t" style="top:852.00px;font-size:14.7px;line-height:14.7px;left:904.50px;width:600px;text-align:center;">21</div><div class="t" style="top:852.00px;font-size:14.7px;line-height:14.7px;left:1206.65px;width:600px;text-align:center;">13</div><div class="t" style="top:852.00px;font-size:14.7px;line-height:14.7px;left:1508.80px;width:600px;text-align:center;">3</div><div class="t" style="top:852.00px;font-size:14.7px;line-height:14.7px;left:1810.95px;width:600px;text-align:center;">3</div><div class="rate" style="left:721.0px;top:850px;color:#cf8a2c;"><svg class="dl" height="19"><line x1="0" y1="9.6" x2="100%" y2="9.6" stroke="#cf8a2c" stroke-width="1.25"/></svg><span>48%</span><svg class="ar" height="19"><line x1="0" y1="9.6" x2="100%" y2="9.6" stroke="#cf8a2c" stroke-width="1.25"/><svg x="100%" y="0" width="1" height="19" overflow="visible"><path d="M-4.3 6.1L-0.8 9.6L-4.3 13.1" fill="none" stroke="#cf8a2c" stroke-width="1.25"/></svg></svg></div><div class="rate" style="left:1023.25px;top:850px;color:#d9413f;"><svg class="dl" height="19"><line x1="0" y1="9.6" x2="100%" y2="9.6" stroke="#d9413f" stroke-width="1.25"/></svg><span>20%</span><svg class="ar" height="19"><line x1="0" y1="9.6" x2="100%" y2="9.6" stroke="#d9413f" stroke-width="1.25"/><svg x="100%" y="0" width="1" height="19" overflow="visible"><path d="M-4.3 6.1L-0.8 9.6L-4.3 13.1" fill="none" stroke="#d9413f" stroke-width="1.25"/></svg></svg></div><div class="rate" style="left:1325.5px;top:850px;color:#1f8a3b;"><svg class="dl" height="19"><line x1="0" y1="9.6" x2="100%" y2="9.6" stroke="#1f8a3b" stroke-width="1.25"/></svg><span>62%</span><svg class="ar" height="19"><line x1="0" y1="9.6" x2="100%" y2="9.6" stroke="#1f8a3b" stroke-width="1.25"/><svg x="100%" y="0" width="1" height="19" overflow="visible"><path d="M-4.3 6.1L-0.8 9.6L-4.3 13.1" fill="none" stroke="#1f8a3b" stroke-width="1.25"/></svg></svg></div><div class="rate" style="left:1627.75px;top:850px;color:#d9413f;"><svg class="dl" height="19"><line x1="0" y1="9.6" x2="100%" y2="9.6" stroke="#d9413f" stroke-width="1.25"/></svg><span>23%</span><svg class="ar" height="19"><line x1="0" y1="9.6" x2="100%" y2="9.6" stroke="#d9413f" stroke-width="1.25"/><svg x="100%" y="0" width="1" height="19" overflow="visible"><path d="M-4.3 6.1L-0.8 9.6L-4.3 13.1" fill="none" stroke="#d9413f" stroke-width="1.25"/></svg></svg></div><div class="rate" style="left:1930.0px;top:850px;color:#1f8a3b;"><svg class="dl" height="19"><line x1="0" y1="9.6" x2="100%" y2="9.6" stroke="#1f8a3b" stroke-width="1.25"/></svg><span>100%</span><svg class="ar" height="19"><line x1="0" y1="9.6" x2="100%" y2="9.6" stroke="#1f8a3b" stroke-width="1.25"/><svg x="100%" y="0" width="1" height="19" overflow="visible"><path d="M-4.3 6.1L-0.8 9.6L-4.3 13.1" fill="none" stroke="#1f8a3b" stroke-width="1.25"/></svg></svg></div><div class="t" style="top:852.00px;font-size:14.7px;line-height:14.7px;left:1964.30px;width:600px;text-align:center;">1 / 72</div><svg style="position:absolute;left:2297px;top:852px" width="13" height="14" viewBox="0 0 13 14"><rect x="0" y="0" width="13" height="14" rx="1.8" fill="#2f6eb5"/><rect x="1.3" y="1.5" width="10.4" height="2.5" rx="0.3" fill="#fff"/><g fill="#fff"><rect x="1.20" y="5.20" width="1.85" height="1.85" rx="0.2"/><rect x="4.13" y="5.20" width="1.85" height="1.85" rx="0.2"/><rect x="7.06" y="5.20" width="1.85" height="1.85" rx="0.2"/><rect x="9.99" y="5.20" width="1.85" height="1.85" rx="0.2"/><rect x="1.20" y="8.13" width="1.85" height="1.85" rx="0.2"/><rect x="4.13" y="8.13" width="1.85" height="1.85" rx="0.2"/><rect x="7.06" y="8.13" width="1.85" height="1.85" rx="0.2"/><rect x="1.20" y="11.06" width="1.85" height="1.85" rx="0.2"/><rect x="4.13" y="11.06" width="1.85" height="1.85" rx="0.2"/><rect x="7.06" y="11.06" width="1.85" height="1.85" rx="0.2"/><rect x="9.99" y="8.13" width="1.85" height="4.75" rx="0.3"/></g></svg><div style="position:absolute;left:17.00px;top:914.00px;width:2310.00px;height:1.00px;box-sizing:border-box;background:#d3d3d3;"></div><div class="t" style="top:889.00px;font-size:14.7px;line-height:14.7px;letter-spacing:0.08px;left:29.40px;">Core Java Manager (closed)</div><div class="t" style="top:889.00px;font-size:14.7px;line-height:14.7px;left:300.20px;width:600px;text-align:center;">3</div><div class="t" style="top:889.00px;font-size:14.7px;line-height:14.7px;left:602.35px;width:600px;text-align:center;">3</div><div class="t" style="top:889.00px;font-size:14.7px;line-height:14.7px;left:904.50px;width:600px;text-align:center;">3</div><div class="t" style="top:889.00px;font-size:14.7px;line-height:14.7px;left:1206.65px;width:600px;text-align:center;">3</div><div class="t" style="top:889.00px;font-size:14.7px;line-height:14.7px;left:1508.80px;width:600px;text-align:center;">3</div><div class="t" style="top:889.00px;font-size:14.7px;line-height:14.7px;left:1810.95px;width:600px;text-align:center;">3</div><div class="rate" style="left:721.0px;top:887px;color:#1f8a3b;"><svg class="dl" height="19"><line x1="0" y1="9.6" x2="100%" y2="9.6" stroke="#1f8a3b" stroke-width="1.25"/></svg><span>100%</span><svg class="ar" height="19"><line x1="0" y1="9.6" x2="100%" y2="9.6" stroke="#1f8a3b" stroke-width="1.25"/><svg x="100%" y="0" width="1" height="19" overflow="visible"><path d="M-4.3 6.1L-0.8 9.6L-4.3 13.1" fill="none" stroke="#1f8a3b" stroke-width="1.25"/></svg></svg></div><div class="rate" style="left:1023.25px;top:887px;color:#1f8a3b;"><svg class="dl" height="19"><line x1="0" y1="9.6" x2="100%" y2="9.6" stroke="#1f8a3b" stroke-width="1.25"/></svg><span>100%</span><svg class="ar" height="19"><line x1="0" y1="9.6" x2="100%" y2="9.6" stroke="#1f8a3b" stroke-width="1.25"/><svg x="100%" y="0" width="1" height="19" overflow="visible"><path d="M-4.3 6.1L-0.8 9.6L-4.3 13.1" fill="none" stroke="#1f8a3b" stroke-width="1.25"/></svg></svg></div><div class="rate" style="left:1325.5px;top:887px;color:#1f8a3b;"><svg class="dl" height="19"><line x1="0" y1="9.6" x2="100%" y2="9.6" stroke="#1f8a3b" stroke-width="1.25"/></svg><span>100%</span><svg class="ar" height="19"><line x1="0" y1="9.6" x2="100%" y2="9.6" stroke="#1f8a3b" stroke-width="1.25"/><svg x="100%" y="0" width="1" height="19" overflow="visible"><path d="M-4.3 6.1L-0.8 9.6L-4.3 13.1" fill="none" stroke="#1f8a3b" stroke-width="1.25"/></svg></svg></div><div class="rate" style="left:1627.75px;top:887px;color:#1f8a3b;"><svg class="dl" height="19"><line x1="0" y1="9.6" x2="100%" y2="9.6" stroke="#1f8a3b" stroke-width="1.25"/></svg><span>100%</span><svg class="ar" height="19"><line x1="0" y1="9.6" x2="100%" y2="9.6" stroke="#1f8a3b" stroke-width="1.25"/><svg x="100%" y="0" width="1" height="19" overflow="visible"><path d="M-4.3 6.1L-0.8 9.6L-4.3 13.1" fill="none" stroke="#1f8a3b" stroke-width="1.25"/></svg></svg></div><div class="rate" style="left:1930.0px;top:887px;color:#1f8a3b;"><svg class="dl" height="19"><line x1="0" y1="9.6" x2="100%" y2="9.6" stroke="#1f8a3b" stroke-width="1.25"/></svg><span>100%</span><svg class="ar" height="19"><line x1="0" y1="9.6" x2="100%" y2="9.6" stroke="#1f8a3b" stroke-width="1.25"/><svg x="100%" y="0" width="1" height="19" overflow="visible"><path d="M-4.3 6.1L-0.8 9.6L-4.3 13.1" fill="none" stroke="#1f8a3b" stroke-width="1.25"/></svg></svg></div><div class="t" style="top:889.00px;font-size:14.7px;line-height:14.7px;left:1964.30px;width:600px;text-align:center;">1 / 1</div><svg style="position:absolute;left:2297px;top:889px" width="13" height="14" viewBox="0 0 13 14"><rect x="0" y="0" width="13" height="14" rx="1.8" fill="#2f6eb5"/><rect x="1.3" y="1.5" width="10.4" height="2.5" rx="0.3" fill="#fff"/><g fill="#fff"><rect x="1.20" y="5.20" width="1.85" height="1.85" rx="0.2"/><rect x="4.13" y="5.20" width="1.85" height="1.85" rx="0.2"/><rect x="7.06" y="5.20" width="1.85" height="1.85" rx="0.2"/><rect x="9.99" y="5.20" width="1.85" height="1.85" rx="0.2"/><rect x="1.20" y="8.13" width="1.85" height="1.85" rx="0.2"/><rect x="4.13" y="8.13" width="1.85" height="1.85" rx="0.2"/><rect x="7.06" y="8.13" width="1.85" height="1.85" rx="0.2"/><rect x="1.20" y="11.06" width="1.85" height="1.85" rx="0.2"/><rect x="4.13" y="11.06" width="1.85" height="1.85" rx="0.2"/><rect x="7.06" y="11.06" width="1.85" height="1.85" rx="0.2"/><rect x="9.99" y="8.13" width="1.85" height="4.75" rx="0.3"/></g></svg><div style="position:absolute;left:17.00px;top:951.00px;width:2310.00px;height:1.00px;box-sizing:border-box;background:#d3d3d3;"></div><div class="t" style="top:926.00px;font-size:14.7px;line-height:14.7px;letter-spacing:0.08px;left:29.40px;">Microsoft SCCM Engineer (closed)</div><div class="t" style="top:926.00px;font-size:14.7px;line-height:14.7px;left:300.20px;width:600px;text-align:center;">33</div><div class="t" style="top:926.00px;font-size:14.7px;line-height:14.7px;left:602.35px;width:600px;text-align:center;">28</div><div class="t" style="top:926.00px;font-size:14.7px;line-height:14.7px;left:904.50px;width:600px;text-align:center;">14</div><div class="t" style="top:926.00px;font-size:14.7px;line-height:14.7px;left:1206.65px;width:600px;text-align:center;">6</div><div class="t" style="top:926.00px;font-size:14.7px;line-height:14.7px;left:1508.80px;width:600px;text-align:center;">3</div><div class="t" style="top:926.00px;font-size:14.7px;line-height:14.7px;left:1810.95px;width:600px;text-align:center;">2</div><div class="rate" style="left:721.0px;top:924px;color:#1f8a3b;"><svg class="dl" height="19"><line x1="0" y1="9.6" x2="100%" y2="9.6" stroke="#1f8a3b" stroke-width="1.25"/></svg><span>85%</span><svg class="ar" height="19"><line x1="0" y1="9.6" x2="100%" y2="9.6" stroke="#1f8a3b" stroke-width="1.25"/><svg x="100%" y="0" width="1" height="19" overflow="visible"><path d="M-4.3 6.1L-0.8 9.6L-4.3 13.1" fill="none" stroke="#1f8a3b" stroke-width="1.25"/></svg></svg></div><div class="rate" style="left:1023.25px;top:924px;color:#cf8a2c;"><svg class="dl" height="19"><line x1="0" y1="9.6" x2="100%" y2="9.6" stroke="#cf8a2c" stroke-width="1.25"/></svg><span>50%</span><svg class="ar" height="19"><line x1="0" y1="9.6" x2="100%" y2="9.6" stroke="#cf8a2c" stroke-width="1.25"/><svg x="100%" y="0" width="1" height="19" overflow="visible"><path d="M-4.3 6.1L-0.8 9.6L-4.3 13.1" fill="none" stroke="#cf8a2c" stroke-width="1.25"/></svg></svg></div><div class="rate" style="left:1325.5px;top:924px;color:#cf8a2c;"><svg class="dl" height="19"><line x1="0" y1="9.6" x2="100%" y2="9.6" stroke="#cf8a2c" stroke-width="1.25"/></svg><span>43%</span><svg class="ar" height="19"><line x1="0" y1="9.6" x2="100%" y2="9.6" stroke="#cf8a2c" stroke-width="1.25"/><svg x="100%" y="0" width="1" height="19" overflow="visible"><path d="M-4.3 6.1L-0.8 9.6L-4.3 13.1" fill="none" stroke="#cf8a2c" stroke-width="1.25"/></svg></svg></div><div class="rate" style="left:1627.75px;top:924px;color:#cf8a2c;"><svg class="dl" height="19"><line x1="0" y1="9.6" x2="100%" y2="9.6" stroke="#cf8a2c" stroke-width="1.25"/></svg><span>50%</span><svg class="ar" height="19"><line x1="0" y1="9.6" x2="100%" y2="9.6" stroke="#cf8a2c" stroke-width="1.25"/><svg x="100%" y="0" width="1" height="19" overflow="visible"><path d="M-4.3 6.1L-0.8 9.6L-4.3 13.1" fill="none" stroke="#cf8a2c" stroke-width="1.25"/></svg></svg></div><div class="rate" style="left:1930.0px;top:924px;color:#1f8a3b;"><svg class="dl" height="19"><line x1="0" y1="9.6" x2="100%" y2="9.6" stroke="#1f8a3b" stroke-width="1.25"/></svg><span>67%</span><svg class="ar" height="19"><line x1="0" y1="9.6" x2="100%" y2="9.6" stroke="#1f8a3b" stroke-width="1.25"/><svg x="100%" y="0" width="1" height="19" overflow="visible"><path d="M-4.3 6.1L-0.8 9.6L-4.3 13.1" fill="none" stroke="#1f8a3b" stroke-width="1.25"/></svg></svg></div><div class="t" style="top:926.00px;font-size:14.7px;line-height:14.7px;left:1964.30px;width:600px;text-align:center;">1 / 17</div><svg style="position:absolute;left:2297px;top:926px" width="13" height="14" viewBox="0 0 13 14"><rect x="0" y="0" width="13" height="14" rx="1.8" fill="#2f6eb5"/><rect x="1.3" y="1.5" width="10.4" height="2.5" rx="0.3" fill="#fff"/><g fill="#fff"><rect x="1.20" y="5.20" width="1.85" height="1.85" rx="0.2"/><rect x="4.13" y="5.20" width="1.85" height="1.85" rx="0.2"/><rect x="7.06" y="5.20" width="1.85" height="1.85" rx="0.2"/><rect x="9.99" y="5.20" width="1.85" height="1.85" rx="0.2"/><rect x="1.20" y="8.13" width="1.85" height="1.85" rx="0.2"/><rect x="4.13" y="8.13" width="1.85" height="1.85" rx="0.2"/><rect x="7.06" y="8.13" width="1.85" height="1.85" rx="0.2"/><rect x="1.20" y="11.06" width="1.85" height="1.85" rx="0.2"/><rect x="4.13" y="11.06" width="1.85" height="1.85" rx="0.2"/><rect x="7.06" y="11.06" width="1.85" height="1.85" rx="0.2"/><rect x="9.99" y="8.13" width="1.85" height="4.75" rx="0.3"/></g></svg><div style="position:absolute;left:17.00px;top:988.00px;width:2310.00px;height:1.00px;box-sizing:border-box;background:#d3d3d3;"></div><div class="t" style="top:963.00px;font-size:14.7px;line-height:14.7px;letter-spacing:0.08px;left:29.40px;">Principal Azure Architect (open)</div><div class="t" style="top:963.00px;font-size:14.7px;line-height:14.7px;left:300.20px;width:600px;text-align:center;">14</div><div class="t" style="top:963.00px;font-size:14.7px;line-height:14.7px;left:602.35px;width:600px;text-align:center;">6</div><div class="t" style="top:963.00px;font-size:14.7px;line-height:14.7px;left:904.50px;width:600px;text-align:center;">2</div><div class="t" style="top:963.00px;font-size:14.7px;line-height:14.7px;left:1206.65px;width:600px;text-align:center;">2</div><div class="t" style="top:963.00px;font-size:14.7px;line-height:14.7px;left:1508.80px;width:600px;text-align:center;">1</div><div class="t" style="top:963.00px;font-size:14.7px;line-height:14.7px;left:1810.95px;width:600px;text-align:center;">1</div><div class="rate" style="left:721.0px;top:961px;color:#cf8a2c;"><svg class="dl" height="19"><line x1="0" y1="9.6" x2="100%" y2="9.6" stroke="#cf8a2c" stroke-width="1.25"/></svg><span>43%</span><svg class="ar" height="19"><line x1="0" y1="9.6" x2="100%" y2="9.6" stroke="#cf8a2c" stroke-width="1.25"/><svg x="100%" y="0" width="1" height="19" overflow="visible"><path d="M-4.3 6.1L-0.8 9.6L-4.3 13.1" fill="none" stroke="#cf8a2c" stroke-width="1.25"/></svg></svg></div><div class="rate" style="left:1023.25px;top:961px;color:#d9413f;"><svg class="dl" height="19"><line x1="0" y1="9.6" x2="100%" y2="9.6" stroke="#d9413f" stroke-width="1.25"/></svg><span>33%</span><svg class="ar" height="19"><line x1="0" y1="9.6" x2="100%" y2="9.6" stroke="#d9413f" stroke-width="1.25"/><svg x="100%" y="0" width="1" height="19" overflow="visible"><path d="M-4.3 6.1L-0.8 9.6L-4.3 13.1" fill="none" stroke="#d9413f" stroke-width="1.25"/></svg></svg></div><div class="rate" style="left:1325.5px;top:961px;color:#1f8a3b;"><svg class="dl" height="19"><line x1="0" y1="9.6" x2="100%" y2="9.6" stroke="#1f8a3b" stroke-width="1.25"/></svg><span>100%</span><svg class="ar" height="19"><line x1="0" y1="9.6" x2="100%" y2="9.6" stroke="#1f8a3b" stroke-width="1.25"/><svg x="100%" y="0" width="1" height="19" overflow="visible"><path d="M-4.3 6.1L-0.8 9.6L-4.3 13.1" fill="none" stroke="#1f8a3b" stroke-width="1.25"/></svg></svg></div><div class="rate" style="left:1627.75px;top:961px;color:#cf8a2c;"><svg class="dl" height="19"><line x1="0" y1="9.6" x2="100%" y2="9.6" stroke="#cf8a2c" stroke-width="1.25"/></svg><span>50%</span><svg class="ar" height="19"><line x1="0" y1="9.6" x2="100%" y2="9.6" stroke="#cf8a2c" stroke-width="1.25"/><svg x="100%" y="0" width="1" height="19" overflow="visible"><path d="M-4.3 6.1L-0.8 9.6L-4.3 13.1" fill="none" stroke="#cf8a2c" stroke-width="1.25"/></svg></svg></div><div class="rate" style="left:1930.0px;top:961px;color:#1f8a3b;"><svg class="dl" height="19"><line x1="0" y1="9.6" x2="100%" y2="9.6" stroke="#1f8a3b" stroke-width="1.25"/></svg><span>100%</span><svg class="ar" height="19"><line x1="0" y1="9.6" x2="100%" y2="9.6" stroke="#1f8a3b" stroke-width="1.25"/><svg x="100%" y="0" width="1" height="19" overflow="visible"><path d="M-4.3 6.1L-0.8 9.6L-4.3 13.1" fill="none" stroke="#1f8a3b" stroke-width="1.25"/></svg></svg></div><div class="t" style="top:963.00px;font-size:14.7px;line-height:14.7px;left:1964.30px;width:600px;text-align:center;">1 / 14</div><svg style="position:absolute;left:2297px;top:963px" width="13" height="14" viewBox="0 0 13 14"><rect x="0" y="0" width="13" height="14" rx="1.8" fill="#2f6eb5"/><rect x="1.3" y="1.5" width="10.4" height="2.5" rx="0.3" fill="#fff"/><g fill="#fff"><rect x="1.20" y="5.20" width="1.85" height="1.85" rx="0.2"/><rect x="4.13" y="5.20" width="1.85" height="1.85" rx="0.2"/><rect x="7.06" y="5.20" width="1.85" height="1.85" rx="0.2"/><rect x="9.99" y="5.20" width="1.85" height="1.85" rx="0.2"/><rect x="1.20" y="8.13" width="1.85" height="1.85" rx="0.2"/><rect x="4.13" y="8.13" width="1.85" height="1.85" rx="0.2"/><rect x="7.06" y="8.13" width="1.85" height="1.85" rx="0.2"/><rect x="1.20" y="11.06" width="1.85" height="1.85" rx="0.2"/><rect x="4.13" y="11.06" width="1.85" height="1.85" rx="0.2"/><rect x="7.06" y="11.06" width="1.85" height="1.85" rx="0.2"/><rect x="9.99" y="8.13" width="1.85" height="4.75" rx="0.3"/></g></svg><div style="position:absolute;left:17.00px;top:1025.00px;width:2310.00px;height:1.00px;box-sizing:border-box;background:#d3d3d3;"></div><div class="t" style="top:1000.00px;font-size:14.7px;line-height:14.7px;letter-spacing:0.08px;left:29.40px;">Full Stack Engineer (closed)</div><div class="t" style="top:1000.00px;font-size:14.7px;line-height:14.7px;left:300.20px;width:600px;text-align:center;">1</div><div class="t" style="top:1000.00px;font-size:14.7px;line-height:14.7px;left:602.35px;width:600px;text-align:center;">1</div><div class="t" style="top:1000.00px;font-size:14.7px;line-height:14.7px;left:904.50px;width:600px;text-align:center;">1</div><div class="t" style="top:1000.00px;font-size:14.7px;line-height:14.7px;left:1206.65px;width:600px;text-align:center;">1</div><div class="t" style="top:1000.00px;font-size:14.7px;line-height:14.7px;left:1508.80px;width:600px;text-align:center;">1</div><div class="t" style="top:1000.00px;font-size:14.7px;line-height:14.7px;left:1810.95px;width:600px;text-align:center;">1</div><div class="rate" style="left:721.0px;top:998px;color:#1f8a3b;"><svg class="dl" height="19"><line x1="0" y1="9.6" x2="100%" y2="9.6" stroke="#1f8a3b" stroke-width="1.25"/></svg><span>100%</span><svg class="ar" height="19"><line x1="0" y1="9.6" x2="100%" y2="9.6" stroke="#1f8a3b" stroke-width="1.25"/><svg x="100%" y="0" width="1" height="19" overflow="visible"><path d="M-4.3 6.1L-0.8 9.6L-4.3 13.1" fill="none" stroke="#1f8a3b" stroke-width="1.25"/></svg></svg></div><div class="rate" style="left:1023.25px;top:998px;color:#1f8a3b;"><svg class="dl" height="19"><line x1="0" y1="9.6" x2="100%" y2="9.6" stroke="#1f8a3b" stroke-width="1.25"/></svg><span>100%</span><svg class="ar" height="19"><line x1="0" y1="9.6" x2="100%" y2="9.6" stroke="#1f8a3b" stroke-width="1.25"/><svg x="100%" y="0" width="1" height="19" overflow="visible"><path d="M-4.3 6.1L-0.8 9.6L-4.3 13.1" fill="none" stroke="#1f8a3b" stroke-width="1.25"/></svg></svg></div><div class="rate" style="left:1325.5px;top:998px;color:#1f8a3b;"><svg class="dl" height="19"><line x1="0" y1="9.6" x2="100%" y2="9.6" stroke="#1f8a3b" stroke-width="1.25"/></svg><span>100%</span><svg class="ar" height="19"><line x1="0" y1="9.6" x2="100%" y2="9.6" stroke="#1f8a3b" stroke-width="1.25"/><svg x="100%" y="0" width="1" height="19" overflow="visible"><path d="M-4.3 6.1L-0.8 9.6L-4.3 13.1" fill="none" stroke="#1f8a3b" stroke-width="1.25"/></svg></svg></div><div class="rate" style="left:1627.75px;top:998px;color:#1f8a3b;"><svg class="dl" height="19"><line x1="0" y1="9.6" x2="100%" y2="9.6" stroke="#1f8a3b" stroke-width="1.25"/></svg><span>100%</span><svg class="ar" height="19"><line x1="0" y1="9.6" x2="100%" y2="9.6" stroke="#1f8a3b" stroke-width="1.25"/><svg x="100%" y="0" width="1" height="19" overflow="visible"><path d="M-4.3 6.1L-0.8 9.6L-4.3 13.1" fill="none" stroke="#1f8a3b" stroke-width="1.25"/></svg></svg></div><div class="rate" style="left:1930.0px;top:998px;color:#1f8a3b;"><svg class="dl" height="19"><line x1="0" y1="9.6" x2="100%" y2="9.6" stroke="#1f8a3b" stroke-width="1.25"/></svg><span>100%</span><svg class="ar" height="19"><line x1="0" y1="9.6" x2="100%" y2="9.6" stroke="#1f8a3b" stroke-width="1.25"/><svg x="100%" y="0" width="1" height="19" overflow="visible"><path d="M-4.3 6.1L-0.8 9.6L-4.3 13.1" fill="none" stroke="#1f8a3b" stroke-width="1.25"/></svg></svg></div><div class="t" style="top:1000.00px;font-size:14.7px;line-height:14.7px;left:1964.30px;width:600px;text-align:center;">1 / 1</div><svg style="position:absolute;left:2297px;top:1000px" width="13" height="14" viewBox="0 0 13 14"><rect x="0" y="0" width="13" height="14" rx="1.8" fill="#2f6eb5"/><rect x="1.3" y="1.5" width="10.4" height="2.5" rx="0.3" fill="#fff"/><g fill="#fff"><rect x="1.20" y="5.20" width="1.85" height="1.85" rx="0.2"/><rect x="4.13" y="5.20" width="1.85" height="1.85" rx="0.2"/><rect x="7.06" y="5.20" width="1.85" height="1.85" rx="0.2"/><rect x="9.99" y="5.20" width="1.85" height="1.85" rx="0.2"/><rect x="1.20" y="8.13" width="1.85" height="1.85" rx="0.2"/><rect x="4.13" y="8.13" width="1.85" height="1.85" rx="0.2"/><rect x="7.06" y="8.13" width="1.85" height="1.85" rx="0.2"/><rect x="1.20" y="11.06" width="1.85" height="1.85" rx="0.2"/><rect x="4.13" y="11.06" width="1.85" height="1.85" rx="0.2"/><rect x="7.06" y="11.06" width="1.85" height="1.85" rx="0.2"/><rect x="9.99" y="8.13" width="1.85" height="4.75" rx="0.3"/></g></svg><div style="position:absolute;left:17.00px;top:1062.00px;width:2310.00px;height:1.00px;box-sizing:border-box;background:#d3d3d3;"></div><div class="t" style="top:1037.00px;font-size:14.7px;line-height:14.7px;letter-spacing:0.08px;left:29.40px;">Principal Developer/Architect (open)</div><div class="t" style="top:1037.00px;font-size:14.7px;line-height:14.7px;left:300.20px;width:600px;text-align:center;">21</div><div class="t" style="top:1037.00px;font-size:14.7px;line-height:14.7px;left:602.35px;width:600px;text-align:center;">9</div><div class="t" style="top:1037.00px;font-size:14.7px;line-height:14.7px;left:904.50px;width:600px;text-align:center;">6</div><div class="t" style="top:1037.00px;font-size:14.7px;line-height:14.7px;left:1206.65px;width:600px;text-align:center;">1</div><div class="t" style="top:1037.00px;font-size:14.7px;line-height:14.7px;left:1508.80px;width:600px;text-align:center;">1</div><div class="t" style="top:1037.00px;font-size:14.7px;line-height:14.7px;left:1810.95px;width:600px;text-align:center;">1</div><div class="rate" style="left:721.0px;top:1035px;color:#cf8a2c;"><svg class="dl" height="19"><line x1="0" y1="9.6" x2="100%" y2="9.6" stroke="#cf8a2c" stroke-width="1.25"/></svg><span>43%</span><svg class="ar" height="19"><line x1="0" y1="9.6" x2="100%" y2="9.6" stroke="#cf8a2c" stroke-width="1.25"/><svg x="100%" y="0" width="1" height="19" overflow="visible"><path d="M-4.3 6.1L-0.8 9.6L-4.3 13.1" fill="none" stroke="#cf8a2c" stroke-width="1.25"/></svg></svg></div><div class="rate" style="left:1023.25px;top:1035px;color:#1f8a3b;"><svg class="dl" height="19"><line x1="0" y1="9.6" x2="100%" y2="9.6" stroke="#1f8a3b" stroke-width="1.25"/></svg><span>67%</span><svg class="ar" height="19"><line x1="0" y1="9.6" x2="100%" y2="9.6" stroke="#1f8a3b" stroke-width="1.25"/><svg x="100%" y="0" width="1" height="19" overflow="visible"><path d="M-4.3 6.1L-0.8 9.6L-4.3 13.1" fill="none" stroke="#1f8a3b" stroke-width="1.25"/></svg></svg></div><div class="rate" style="left:1325.5px;top:1035px;color:#d9413f;"><svg class="dl" height="19"><line x1="0" y1="9.6" x2="100%" y2="9.6" stroke="#d9413f" stroke-width="1.25"/></svg><span>17%</span><svg class="ar" height="19"><line x1="0" y1="9.6" x2="100%" y2="9.6" stroke="#d9413f" stroke-width="1.25"/><svg x="100%" y="0" width="1" height="19" overflow="visible"><path d="M-4.3 6.1L-0.8 9.6L-4.3 13.1" fill="none" stroke="#d9413f" stroke-width="1.25"/></svg></svg></div><div class="rate" style="left:1627.75px;top:1035px;color:#1f8a3b;"><svg class="dl" height="19"><line x1="0" y1="9.6" x2="100%" y2="9.6" stroke="#1f8a3b" stroke-width="1.25"/></svg><span>100%</span><svg class="ar" height="19"><line x1="0" y1="9.6" x2="100%" y2="9.6" stroke="#1f8a3b" stroke-width="1.25"/><svg x="100%" y="0" width="1" height="19" overflow="visible"><path d="M-4.3 6.1L-0.8 9.6L-4.3 13.1" fill="none" stroke="#1f8a3b" stroke-width="1.25"/></svg></svg></div><div class="rate" style="left:1930.0px;top:1035px;color:#1f8a3b;"><svg class="dl" height="19"><line x1="0" y1="9.6" x2="100%" y2="9.6" stroke="#1f8a3b" stroke-width="1.25"/></svg><span>100%</span><svg class="ar" height="19"><line x1="0" y1="9.6" x2="100%" y2="9.6" stroke="#1f8a3b" stroke-width="1.25"/><svg x="100%" y="0" width="1" height="19" overflow="visible"><path d="M-4.3 6.1L-0.8 9.6L-4.3 13.1" fill="none" stroke="#1f8a3b" stroke-width="1.25"/></svg></svg></div><div class="t" style="top:1037.00px;font-size:14.7px;line-height:14.7px;left:1964.30px;width:600px;text-align:center;">1 / 21</div><svg style="position:absolute;left:2297px;top:1037px" width="13" height="14" viewBox="0 0 13 14"><rect x="0" y="0" width="13" height="14" rx="1.8" fill="#2f6eb5"/><rect x="1.3" y="1.5" width="10.4" height="2.5" rx="0.3" fill="#fff"/><g fill="#fff"><rect x="1.20" y="5.20" width="1.85" height="1.85" rx="0.2"/><rect x="4.13" y="5.20" width="1.85" height="1.85" rx="0.2"/><rect x="7.06" y="5.20" width="1.85" height="1.85" rx="0.2"/><rect x="9.99" y="5.20" width="1.85" height="1.85" rx="0.2"/><rect x="1.20" y="8.13" width="1.85" height="1.85" rx="0.2"/><rect x="4.13" y="8.13" width="1.85" height="1.85" rx="0.2"/><rect x="7.06" y="8.13" width="1.85" height="1.85" rx="0.2"/><rect x="1.20" y="11.06" width="1.85" height="1.85" rx="0.2"/><rect x="4.13" y="11.06" width="1.85" height="1.85" rx="0.2"/><rect x="7.06" y="11.06" width="1.85" height="1.85" rx="0.2"/><rect x="9.99" y="8.13" width="1.85" height="4.75" rx="0.3"/></g></svg><div style="position:absolute;left:17.00px;top:1099.00px;width:2310.00px;height:1.00px;box-sizing:border-box;background:#d3d3d3;"></div><div class="t" style="top:1074.00px;font-size:14.7px;line-height:14.7px;letter-spacing:0.08px;left:29.40px;">Senior Application Developer (open)</div><div class="t" style="top:1074.00px;font-size:14.7px;line-height:14.7px;left:300.20px;width:600px;text-align:center;">20</div><div class="t" style="top:1074.00px;font-size:14.7px;line-height:14.7px;left:602.35px;width:600px;text-align:center;">2</div><div class="t" style="top:1074.00px;font-size:14.7px;line-height:14.7px;left:904.50px;width:600px;text-align:center;">0</div><div class="t" style="top:1074.00px;font-size:14.7px;line-height:14.7px;left:1206.65px;width:600px;text-align:center;">0</div><div class="t" style="top:1074.00px;font-size:14.7px;line-height:14.7px;left:1508.80px;width:600px;text-align:center;">0</div><div class="t" style="top:1074.00px;font-size:14.7px;line-height:14.7px;left:1810.95px;width:600px;text-align:center;">0</div><div class="rate" style="left:721.0px;top:1072px;color:#d9413f;"><svg class="dl" height="19"><line x1="0" y1="9.6" x2="100%" y2="9.6" stroke="#d9413f" stroke-width="1.25"/></svg><span>10%</span><svg class="ar" height="19"><line x1="0" y1="9.6" x2="100%" y2="9.6" stroke="#d9413f" stroke-width="1.25"/><svg x="100%" y="0" width="1" height="19" overflow="visible"><path d="M-4.3 6.1L-0.8 9.6L-4.3 13.1" fill="none" stroke="#d9413f" stroke-width="1.25"/></svg></svg></div><div class="rate" style="left:1023.25px;top:1072px;color:#d9413f;"><svg class="dl" height="19"><line x1="0" y1="9.6" x2="100%" y2="9.6" stroke="#d9413f" stroke-width="1.25"/></svg><span>0%</span><svg class="ar" height="19"><line x1="0" y1="9.6" x2="100%" y2="9.6" stroke="#d9413f" stroke-width="1.25"/><svg x="100%" y="0" width="1" height="19" overflow="visible"><path d="M-4.3 6.1L-0.8 9.6L-4.3 13.1" fill="none" stroke="#d9413f" stroke-width="1.25"/></svg></svg></div><div class="t" style="top:1074.00px;font-size:14.7px;line-height:14.7px;left:1964.00px;width:600px;text-align:center;">-</div><div class="t" style="top:1123.00px;font-size:14.5px;line-height:14.5px;color:#333;letter-spacing:0.154px;left:2043.80px;">Rows per page:</div><div style="position:absolute;left:2154.00px;top:1113.00px;width:53.00px;height:34.00px;box-sizing:border-box;background:#fff;border:1px solid #cfcfcf;border-radius:5px;"></div><div class="t" style="top:1123.00px;font-size:14.5px;line-height:14.5px;left:2166.20px;">10</div><div style="position:absolute;left:2186px;top:1128.5px;width:0;height:0;border-left:4.0px solid transparent;border-right:4.0px solid transparent;border-top:4px solid #222"></div><div style="position:absolute;left:2215.00px;top:1113.00px;width:100.00px;height:34.00px;box-sizing:border-box;background:#fff;border:1px solid #d6d6d6;border-radius:5px;"></div><div style="position:absolute;left:2215.00px;top:1113.00px;width:32.00px;height:34.00px;box-sizing:border-box;background:#2e6db0;border-radius:5px 0 0 5px;"></div><div style="position:absolute;left:2247.00px;top:1114.00px;width:1.00px;height:32.00px;box-sizing:border-box;background:#e0e0e0;"></div><div style="position:absolute;left:2280.00px;top:1114.00px;width:1.00px;height:32.00px;box-sizing:border-box;background:#e0e0e0;"></div><div class="t" style="top:1123.00px;font-size:14.7px;line-height:14.7px;color:#fff;left:1931.00px;width:600px;text-align:center;">1</div><div class="t" style="top:1123.00px;font-size:14.7px;line-height:14.7px;color:#2e6db0;left:1963.50px;width:600px;text-align:center;">2</div><div class="t" style="top:1123.00px;font-size:14.7px;line-height:14.7px;color:#2e6db0;left:1997.50px;width:600px;text-align:center;">&gt;</div>
</body></html>
